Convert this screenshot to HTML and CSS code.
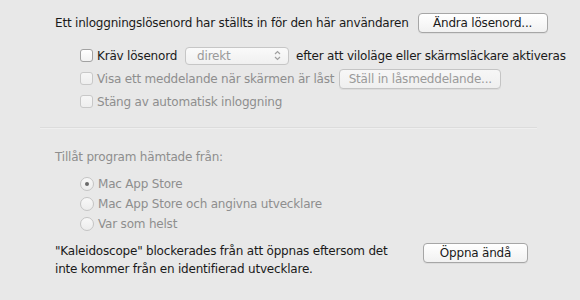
FILE: index.html
```html
<!DOCTYPE html>
<html lang="sv">
<head>
    <meta charset="UTF-8">
    <title>Säkerhet</title>
    <link rel="stylesheet" href="styles.css">
</head>
<body>
    <div class="pane">
        <div class="row first">
            <span class="text">Ett inloggningslösenord har ställts in för den här användaren</span>
            <button class="btn change-btn">Ändra lösenord...</button>
        </div>

        <div class="options">
            <div class="row">
                <span class="check"></span>
                <span class="text">Kräv lösenord</span>
                <span class="select">
                    <span class="select-value">direkt</span>
                    <svg class="select-arrows" width="7" height="11" viewBox="0 0 7 11">
                        <path d="M1 4 L3.5 1.5 L6 4" fill="none" stroke="#a0a0a0" stroke-width="1.2"/>
                        <path d="M1 7 L3.5 9.5 L6 7" fill="none" stroke="#a0a0a0" stroke-width="1.2"/>
                    </svg>
                </span>
                <span class="text">efter att viloläge eller skärmsläckare aktiveras</span>
            </div>
            <div class="row disabled">
                <span class="check"></span>
                <span class="text">Visa ett meddelande när skärmen är låst</span>
                <button class="btn lock-btn" disabled>Ställ in låsmeddelande...</button>
            </div>
            <div class="row disabled">
                <span class="check"></span>
                <span class="text">Stäng av automatisk inloggning</span>
            </div>
        </div>

        <div class="separator"></div>

        <div class="label disabled">Tillåt program hämtade från:</div>

        <div class="radios disabled">
            <div class="radio-row"><span class="radio on"></span><span class="text">Mac App Store</span></div>
            <div class="radio-row"><span class="radio"></span><span class="text">Mac App Store och angivna utvecklare</span></div>
            <div class="radio-row"><span class="radio"></span><span class="text">Var som helst</span></div>
        </div>

        <div class="blocked">
            <p class="blocked-text">"Kaleidoscope" blockerades från att öppnas eftersom det<br>inte kommer från en identifierad utvecklare.</p>
            <button class="btn open-btn">Öppna ändå</button>
        </div>
    </div>
</body>
</html>
```

FILE: styles.css
```css
body {
    margin: 0;
    background-color: #e8e8e8;
    font-family: "DejaVu Sans", "Noto Sans", sans-serif;
    font-size: 12px;
    letter-spacing: -0.2px;
    color: #1a1a1a;
}
.pane {
    width: 580px;
    height: 300px;
    overflow: hidden;
    padding-top: 12px;
    box-sizing: border-box;
}
.row {
    display: flex;
    align-items: center;
    height: 23px;
    white-space: nowrap;
}
.row.first {
    height: 21px;
    padding-left: 55px;
    margin-bottom: 11px;
}
.options {
    padding-left: 80px;
}
.disabled {
    color: #8e8e8e;
}
.btn {
    font-family: inherit;
    font-size: 12px;
    letter-spacing: -0.2px;
    color: #1a1a1a;
    height: 20px;
    padding: 0;
    border: 1px solid #a6a6a6;
    border-radius: 4px;
    background: linear-gradient(#ffffff, #f1f1f1);
    box-shadow: 0 1px 0 rgba(0, 0, 0, 0.05);
}
.btn:disabled {
    color: #9a9a9a;
    border-color: #c4c4c4;
    background: linear-gradient(#f7f7f7, #efefef);
}
.change-btn {
    width: 130px;
    margin-left: 9px;
}
.lock-btn {
    width: 162px;
    margin-left: 5px;
}
.check {
    width: 11px;
    height: 11px;
    border: 1px solid #a2a2a2;
    border-radius: 3px;
    background: linear-gradient(#ffffff, #f2f2f2);
    margin-right: 4px;
    flex-shrink: 0;
}
.disabled .check {
    border-color: #c8c8c8;
    background: linear-gradient(#f6f6f6, #eeeeee);
}
.select {
    display: flex;
    align-items: center;
    justify-content: space-between;
    width: 104px;
    height: 18px;
    margin: 0 7px 0 8px;
    padding: 0 7px 0 11px;
    box-sizing: border-box;
    border: 1px solid #c6c6c6;
    border-radius: 4px;
    background: linear-gradient(#fafafa, #f0f0f0);
    color: #9a9a9a;
}
.separator {
    width: 497px;
    height: 1px;
    margin: 14px 0 0 40px;
    background-color: #dcdcdc;
    border-bottom: 1px solid #efefef;
}
.label {
    height: 20px;
    line-height: 20px;
    padding-left: 55px;
    margin-top: 18px;
}
.radios {
    padding-left: 80px;
    margin-top: 7px;
}
.radio-row {
    display: flex;
    align-items: center;
    height: 20px;
}
.radio {
    position: relative;
    width: 12px;
    height: 12px;
    border: 1px solid #c4c4c4;
    border-radius: 50%;
    background: linear-gradient(#f8f8f8, #ececec);
    margin-right: 4px;
}
.radio.on::after {
    content: "";
    position: absolute;
    left: 4px;
    top: 4px;
    width: 4px;
    height: 4px;
    border-radius: 50%;
    background-color: #6a6a6a;
}
.blocked {
    display: flex;
    align-items: flex-start;
    padding-left: 55px;
    margin-top: 8px;
}
.blocked-text {
    margin: 0;
    line-height: 18px;
    white-space: nowrap;
}
.open-btn {
    width: 105px;
    margin-left: auto;
    margin-right: 52px;
    margin-top: 1px;
}
```
